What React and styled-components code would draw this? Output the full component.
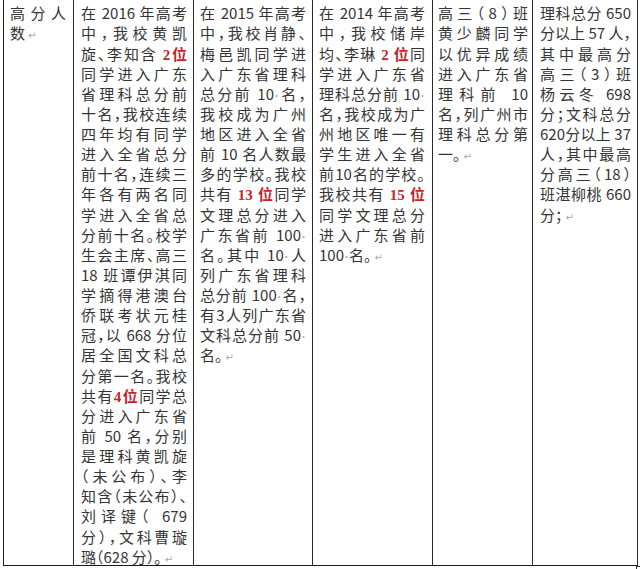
import React from "react";
import styled, { createGlobalStyle } from "styled-components";

const Global = createGlobalStyle`
  html, body { margin: 0; padding: 0; background: #fff; }
  #root { width: 640px; height: 569px; overflow: hidden; }
`;

const Page = styled.div`
  width: 640px;
  height: 569px;
  overflow: hidden;
  background: #fff;
  font-family: "Noto Sans CJK SC", "Liberation Sans", sans-serif;
  color: #353535;
`;

const Table = styled.div`
  margin-left: 3px;
  display: grid;
  grid-template-columns: 70px 120px 119px 120px 100px 105px;
  height: 566px;
  border-left: 1px solid #222;
  box-sizing: border-box;
  width: 635px;
`;

const Cell = styled.div`
  box-sizing: border-box;
  border-right: 1px solid #2a2a2a;
  border-bottom: 1px solid #1a1a1a;
  padding: 3.3px ${(p) => p.$pr}px 0 ${(p) => p.$pl}px;
  overflow: hidden;
`;

const Line = styled.div`
  font-size: 15px;
  line-height: 20.13px;
  height: 20.13px;
  white-space: nowrap;
  text-align: ${(p) => (p.$last ? "left" : "justify")};
  text-align-last: ${(p) => (p.$last ? "left" : "justify")};
  font-feature-settings: "halt";
`;

const Red = styled.span`
  color: #c8222b;
  font-weight: 700;
  font-family: "Liberation Serif", "Noto Sans CJK SC", serif;
`;

const Dot = styled.span`
  color: #b0b0b0;
  font-size: 10px;
`;

const Mark = styled.span`
  color: #a8a8a8;
  font-size: 10px;
  font-family: "DejaVu Sans", sans-serif;
  margin-left: 3px;
`;

const EndMark = styled.div`
  margin-left: 636px;
  width: 4px;
  height: 3px;
  border-top: 1px solid #333;
  border-left: 1px solid #333;
`;

const columns = [
  { pl: 6, pr: 7, lines: ["高分人", "数↵"] },
  {
    pl: 7,
    pr: 6,
    lines: [
      "在 2016 年高考",
      "中，我校黄凯",
      "旋、李知含 [2位]",
      "同学进入广东",
      "省理科总分前",
      "十名，我校连续",
      "四年均有同学",
      "进入全省总分",
      "前十名，连续三",
      "年各有两名同",
      "学进入全省总",
      "分前十名。校学",
      "生会主席、高三",
      "18 班谭伊淇同",
      "学摘得港澳台",
      "侨联考状元桂",
      "冠，以 668 分位",
      "居全国文科总",
      "分第一名。我校",
      "共有[4位]同学总",
      "分进入广东省",
      "前 50 名，分别",
      "是理科黄凯旋",
      "（未公布）、李",
      "知含（未公布）、",
      "刘译键（ 679",
      "分），文科曹璇",
      "璐（628 分）。↵",
    ],
  },
  {
    pl: 6,
    pr: 6,
    lines: [
      "在 2015 年高考",
      "中，我校肖静、",
      "梅邑凯同学进",
      "入广东省理科",
      "总分前 10·名，",
      "我校成为广州",
      "地区进入全省",
      "前 10 名人数最",
      "多的学校。我校",
      "共有 [13 位]同学",
      "文理总分进入",
      "广东省前 100·",
      "名。其中 10·人",
      "列广东省理科",
      "总分前 100·名，",
      "有3人列广东省",
      "文科总分前 50·",
      "名。↵",
    ],
  },
  {
    pl: 6,
    pr: 7,
    lines: [
      "在 2014 年高考",
      "中，我校储岸",
      "均、李琳 [2 位]同",
      "学进入广东省",
      "理科总分前 10·",
      "名，我校成为广",
      "州地区唯一有",
      "学生进入全省",
      "前10名的学校。",
      "我校共有 [15 位]",
      "同学文理总分",
      "进入广东省前",
      "100·名。↵",
    ],
  },
  {
    pl: 5,
    pr: 4,
    lines: [
      "高三（8）班",
      "黄少麟同学",
      "以优异成绩",
      "进入广东省",
      "理科前 10",
      "名，列广州市",
      "理科总分第",
      "一。↵",
    ],
  },
  {
    pl: 7,
    pr: 6,
    lines: [
      "理科总分 650",
      "分以上 57 人，",
      "其中最高分",
      "高三（3）班",
      "杨云冬 698",
      "分；文科总分",
      "620分以上 37",
      "人，其中最高",
      "分高三（18）",
      "班湛柳桃 660",
      "分；↵",
    ],
  },
];

function renderLine(text) {
  const parts = text.split(/(\[[^\]]+\]|·|↵)/).filter((s) => s !== "");
  return parts.map((p, i) => {
    if (p.startsWith("[")) return <Red key={i}>{p.slice(1, -1)}</Red>;
    if (p === "·") return <Dot key={i}>·</Dot>;
    if (p === "↵") return <Mark key={i}>↵</Mark>;
    return <React.Fragment key={i}>{p}</React.Fragment>;
  });
}

export default function App() {
  return (
    <Page>
      <Global />
      <Table>
        {columns.map((col, ci) => (
          <Cell key={ci} $pl={col.pl} $pr={col.pr}>
            {col.lines.map((ln, li) => (
              <Line key={li} $last={li === col.lines.length - 1}>
                {renderLine(ln)}
              </Line>
            ))}
          </Cell>
        ))}
      </Table>
      <EndMark />
    </Page>
  );
}
